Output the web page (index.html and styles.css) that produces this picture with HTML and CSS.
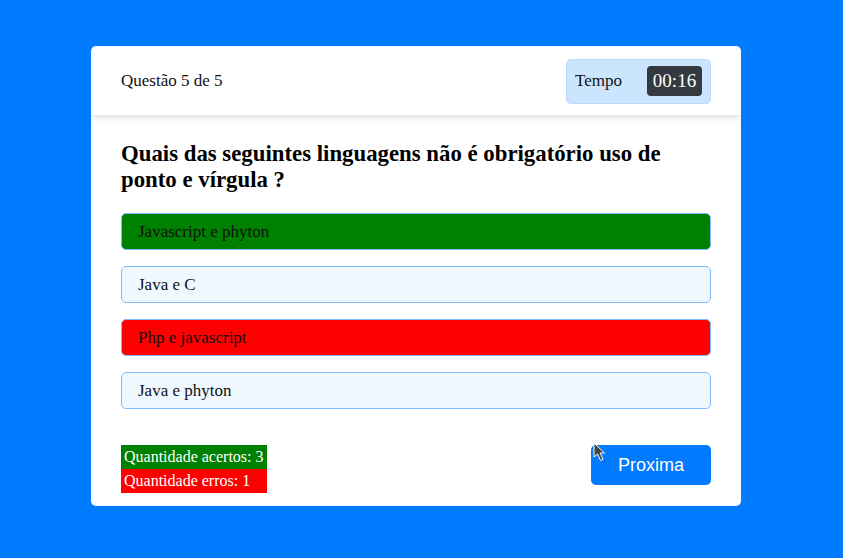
FILE: index.html
```html
<!DOCTYPE html>
<html>
<head>
<meta charset="utf-8">
<link rel="stylesheet" href="styles.css">
</head>
<body>
<div class="page">
  <div class="card">
    <div class="header">
      <div class="count">Questão 5 de 5</div>
      <div class="timer">
        <span class="label">Tempo</span>
        <span class="time">00:16</span>
      </div>
    </div>
    <div class="body">
      <h2 class="question">Quais das seguintes linguagens não é obrigatório uso de ponto e vírgula ?</h2>
      <div class="options">
        <div class="option correct">Javascript e phyton</div>
        <div class="option">Java e C</div>
        <div class="option wrong">Php e javascript</div>
        <div class="option">Java e phyton</div>
      </div>
      <div class="footer">
        <div class="scores">
          <div class="score hits">Quantidade acertos: 3</div>
          <div class="score errors">Quantidade erros: 1</div>
        </div>
        <button class="next">Proxima
          <svg class="cursor" width="14" height="20" viewBox="0 0 14 20"><path d="M1 1 L1 15 L4.5 12 L7.5 18.5 L10 17.3 L7.2 11 L11.5 11 Z" fill="#444" stroke="#fff" stroke-width="1"/></svg>
        </button>
      </div>
    </div>
  </div>
</div>
</body>
</html>
```
FILE: styles.css
```css
* { box-sizing: border-box; }
html, body { margin: 0; padding: 0; }
body {
  background: #007bff;
  font-family: "Liberation Serif", "Times New Roman", serif;
  width: 843px;
  height: 558px;
  overflow: hidden;
}
.page {
  padding-top: 46px;
  padding-left: 91px;
}
.card {
  width: 650px;
  height: 460px;
  background: #fff;
  border-radius: 5px;
  overflow: hidden;
}
.header {
  height: 69px;
  display: flex;
  align-items: center;
  justify-content: space-between;
  padding: 0 30px;
  box-shadow: 0 3px 6px rgba(0,0,0,0.12);
  position: relative;
  z-index: 1;
}
.count {
  font-size: 17px;
  color: #111;
  margin-top: 1px;
}
.timer {
  width: 145px;
  height: 45px;
  background: #cce5ff;
  border: 1px solid #b8daff;
  border-radius: 5px;
  display: flex;
  align-items: center;
  justify-content: space-between;
  padding: 0 8px 0 8px;
  margin-top: 1px;
}
.timer .label {
  font-size: 17px;
  color: #111;
}
.timer .time {
  background: #343a40;
  color: #fff;
  font-size: 19px;
  border-radius: 4px;
  height: 30px;
  width: 55px;
  display: flex;
  align-items: center;
  justify-content: center;
}
.body {
  padding: 26px 30px 0 30px;
}
.question {
  margin: 0;
  font-size: 22.8px;
  line-height: 26px;
  font-weight: bold;
  color: #000;
}
.options {
  margin-top: 20px;
  display: flex;
  flex-direction: column;
  gap: 16px;
}
.option {
  height: 37px;
  border: 1px solid #80bdff;
  border-radius: 5px;
  background: #f0f8ff;
  padding-left: 16px;
  display: flex;
  align-items: center;
  font-size: 17px;
  color: #111;
}
.option.correct { background: #008000; }
.option.wrong { background: #ff0000; }
.footer {
  margin-top: 36px;
  display: flex;
  justify-content: space-between;
  align-items: flex-start;
}
.scores {
  display: flex;
  flex-direction: column;
}
.score {
  height: 24px;
  padding: 0 3px;
  display: flex;
  align-items: center;
  font-size: 16px;
  color: #fff;
}
.score.hits { background: #008000; }
.score.errors { background: #ff0000; }
.next {
  position: relative;
  width: 120px;
  height: 40px;
  background: #007bff;
  color: #fff;
  border: none;
  border-radius: 5px;
  font-family: "Liberation Sans", Arial, sans-serif;
  font-size: 18px;
  padding: 0;
}
.cursor {
  position: absolute;
  left: 2px;
  top: -3px;
}
```
